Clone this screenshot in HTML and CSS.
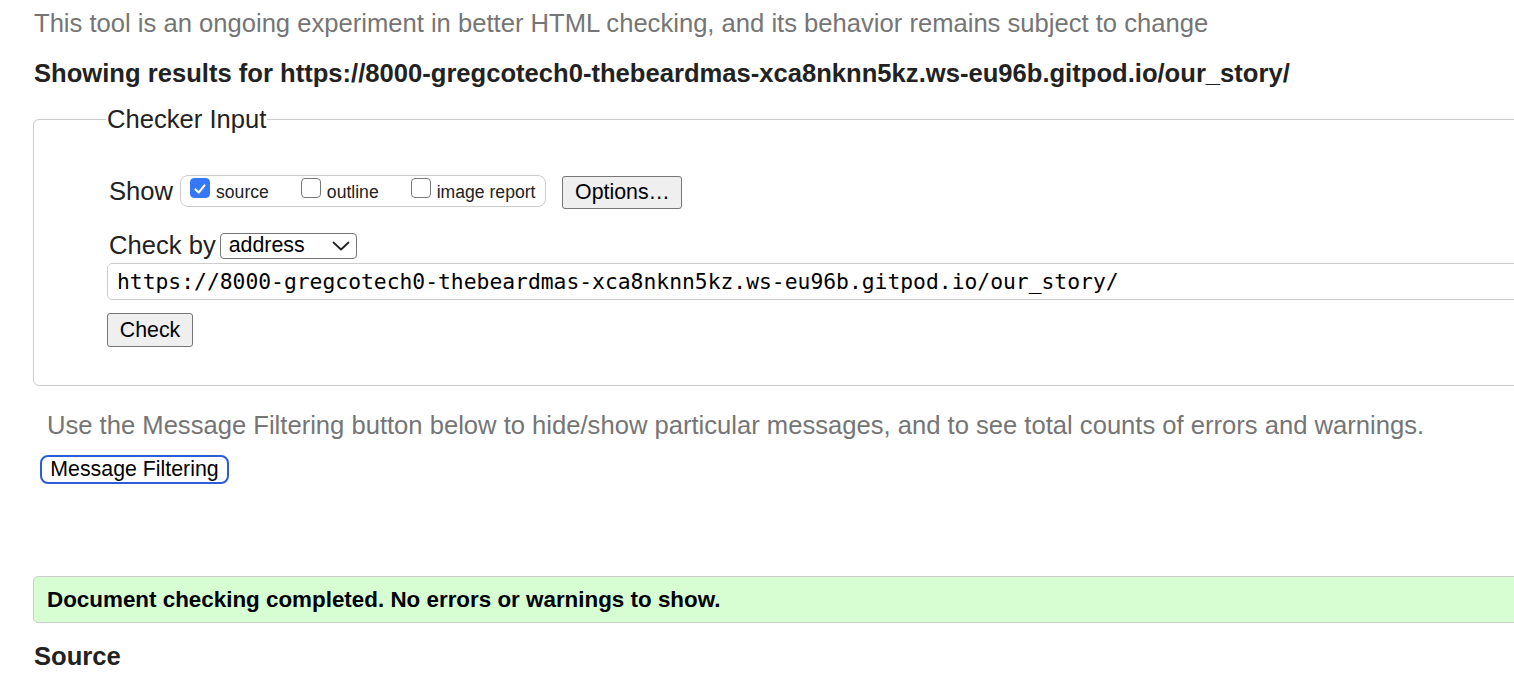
FILE: index.html
```html
<!DOCTYPE html>
<html>
<head>
<meta charset="utf-8">
<link rel="stylesheet" href="styles.css">
</head>
<body>
<div class="page">
  <p class="intro">This tool is an ongoing experiment in better HTML checking, and its behavior remains subject to change</p>
  <h2 class="showing">Showing results for https://8000-gregcotech0-thebeardmas-xca8nknn5kz.ws-eu96b.gitpod.io/our_story/</h2>
  <fieldset class="checker">
    <legend class="legend">Checker Input</legend>
    <div class="row show-row">
      <span class="lbl lbl-show">Show</span>
      <span class="opts">
        <span class="opt"><span class="cb cb-on"><svg viewBox="0 0 20 20" width="20" height="20"><path d="M5 10.5 L8.6 14 L15 6" fill="none" stroke="#fff" stroke-width="2.4" stroke-linecap="round" stroke-linejoin="round"/></svg></span><span class="opt-text">source</span></span>
        <span class="opt"><span class="cb"></span><span class="opt-text">outline</span></span>
        <span class="opt"><span class="cb"></span><span class="opt-text">image report</span></span>
      </span>
      <span class="btn btn-options">Options…</span>
    </div>
    <div class="row by-row">
      <span class="lbl lbl-by">Check by</span>
      <span class="select"><span class="select-text">address</span><svg class="chev" viewBox="0 0 18 10" width="18" height="10"><path d="M1.5 1.5 L9 8.5 L16.5 1.5" fill="none" stroke="#222" stroke-width="1.8" stroke-linecap="round" stroke-linejoin="round"/></svg></span>
    </div>
    <div class="url">https://8000-gregcotech0-thebeardmas-xca8nknn5kz.ws-eu96b.gitpod.io/our_story/</div>
    <span class="btn btn-check">Check</span>
  </fieldset>
  <p class="note">Use the Message Filtering button below to hide/show particular messages, and to see total counts of errors and warnings.</p>
  <div class="btn-filter">Message Filtering</div>
  <div class="success">Document checking completed. No errors or warnings to show.</div>
  <h2 class="source">Source</h2>
</div>
</body>
</html>
```
FILE: styles.css
```css
html, body {
  margin: 0;
  padding: 0;
  background: #fff;
  overflow: hidden;
}
body {
  width: 1514px;
  height: 682px;
  font-family: "Liberation Sans", Arial, sans-serif;
  color: #222;
}
.page {
  padding-left: 33px;
  width: 1700px;
}
.intro {
  margin: 8px 0 0 1px;
  font-size: 25.6px;
  line-height: 30px;
  color: #757575;
}
.showing {
  margin: 20px 0 0 1px;
  font-size: 25.6px;
  line-height: 30px;
  font-weight: bold;
  color: #222;
}
.checker {
  margin: 17px 0 0 0;
  padding: 20px 0 38px 74px;
  border: 1px solid #ccc;
  border-radius: 6px;
  width: 1700px;
}
.legend {
  font-size: 25.6px;
  padding: 0 1px;
  margin-left: -2px;
  color: #222;
}
.row {
  display: flex;
  align-items: center;
}
.show-row {
  margin-top: 20px;
  height: 34px;
}
.lbl {
  font-size: 25.6px;
  margin-left: 1px;
}
.lbl-show {
  margin-right: 7px;
}
.lbl-by {
  margin-right: 4px;
}
.opts {
  display: flex;
  align-items: center;
  height: 30px;
  border: 1px solid #ccc;
  border-radius: 8px;
  padding: 0 10px 0 9px;
  gap: 32px;
}
.opt {
  display: flex;
  align-items: center;
}
.cb {
  box-sizing: border-box;
  width: 20px;
  height: 20px;
  border: 1.5px solid #777;
  border-radius: 4px;
  margin-right: 6px;
  margin-top: -6px;
  display: flex;
}
.cb-on {
  background: #3478f6;
  border-color: #3478f6;
}
.opt-text {
  font-size: 17.6px;
  margin-top: 2px;
}
.btn {
  display: inline-flex;
  align-items: center;
  justify-content: center;
  box-sizing: border-box;
  border: 1px solid #767676;
  border-radius: 3px;
  background: #efefef;
  color: #000;
}
.btn-options {
  margin-left: 16px;
  margin-top: 2px;
  width: 120px;
  height: 33px;
  font-size: 21.33px;
}
.by-row {
  margin-top: 23px;
}
.select {
  box-sizing: border-box;
  display: inline-flex;
  align-items: center;
  justify-content: space-between;
  width: 137px;
  height: 26px;
  border: 1px solid #767676;
  border-radius: 4px;
  padding: 0 6px 0 8px;
}
.select-text {
  font-size: 21.33px;
  color: #000;
}
.chev {
  margin-top: 1px;
}
.url {
  margin-top: 3px;
  margin-left: -1px;
  box-sizing: border-box;
  height: 37px;
  border: 1px solid #ccc;
  border-radius: 5px;
  padding: 0 0 0 9px;
  display: flex;
  align-items: center;
  font-family: "DejaVu Sans Mono", "Liberation Mono", monospace;
  font-size: 21.33px;
  color: #000;
}
.btn-check {
  margin-top: 13px;
  margin-left: -1px;
  width: 86px;
  height: 34px;
  font-size: 21.33px;
}
.note {
  margin: 24px 0 0 14px;
  font-size: 25.6px;
  line-height: 30px;
  color: #757575;
}
.btn-filter {
  display: flex;
  align-items: center;
  justify-content: center;
  box-sizing: border-box;
  margin: 15px 0 0 7px;
  width: 189px;
  height: 29px;
  border: 2px solid #2a5dd6;
  border-radius: 8px;
  font-size: 21.33px;
  color: #000;
  background: #fff;
}
.success {
  margin-top: 92px;
  box-sizing: border-box;
  height: 47px;
  width: 1700px;
  background: #d7fdd3;
  border: 1px solid #ccc;
  border-radius: 5px;
  padding-left: 13px;
  display: flex;
  align-items: center;
  font-size: 22.4px;
  font-weight: bold;
  color: #000;
}
.source {
  margin: 18px 0 0 1px;
  font-size: 25.6px;
  line-height: 30px;
  font-weight: bold;
  color: #222;
}
```
